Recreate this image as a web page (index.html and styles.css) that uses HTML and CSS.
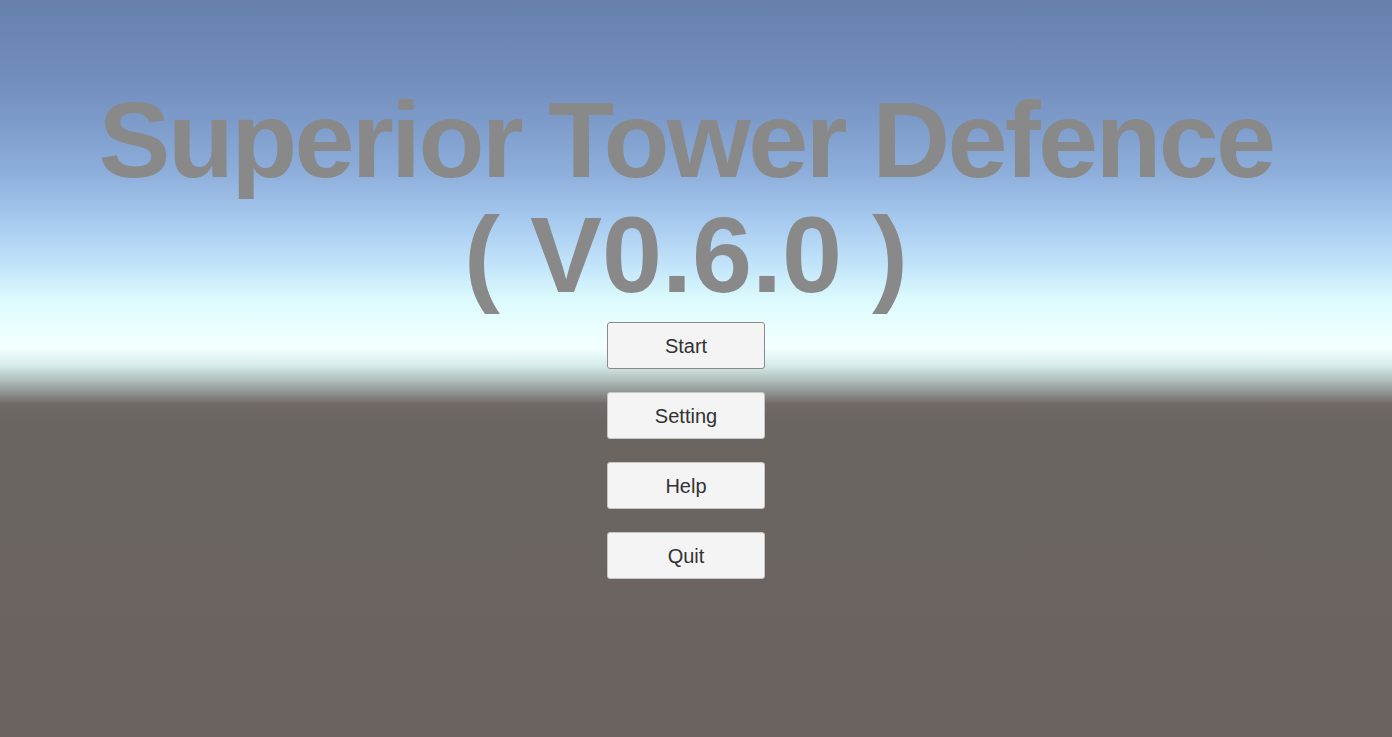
FILE: index.html
```html
<!DOCTYPE html>
<html>
<head>
<meta charset="utf-8">
<link rel="stylesheet" href="styles.css">
</head>
<body>
<main class="scene">
  <h1 class="title">
    <span class="title-line title-main">Superior Tower Defence</span>
    <span class="title-line">( V0.6.0 )</span>
  </h1>
  <nav class="menu">
    <button class="btn btn-active">Start</button>
    <button class="btn">Setting</button>
    <button class="btn">Help</button>
    <button class="btn">Quit</button>
  </nav>
</main>
</body>
</html>
```
FILE: styles.css
```css
html, body {
  margin: 0;
  padding: 0;
  width: 1392px;
  height: 737px;
  overflow: hidden;
}
body {
  font-family: "Liberation Sans", Arial, sans-serif;
  background: linear-gradient(to bottom,
    #6680ab 0px,
    #7490c0 90px,
    #8cadd9 170px,
    #a6c9ef 220px,
    #c2e4fa 265px,
    #dcfbfd 300px,
    #ecffff 330px,
    #f4ffff 348px,
    #d6eceb 365px,
    #aebcbb 381px,
    #8a8e8c 394px,
    #716a67 404px,
    #6b6561 420px,
    #6a6360 737px);
}
.scene {
  width: 1372px;
  height: 737px;
  display: flex;
  flex-direction: column;
  align-items: center;
}
.title {
  margin: 82px 0 0 0;
  display: flex;
  flex-direction: column;
  align-items: center;
  font-family: "Liberation Sans", Arial, sans-serif;
  font-weight: bold;
  font-size: 108px;
  line-height: 115px;
  color: #898989;
  white-space: nowrap;
}
.title-main {
  letter-spacing: -2.7px;
}
.menu {
  margin-top: 10px;
  display: flex;
  flex-direction: column;
  gap: 23px;
}
.btn {
  width: 158px;
  height: 47px;
  background: #f4f4f4;
  border: 1px solid #c6c6c6;
  border-radius: 3px;
  font-family: "Liberation Sans", Arial, sans-serif;
  font-size: 20px;
  color: #323232;
  padding: 1px 0 0 0;
}
.btn-active {
  border-color: #8a8a8a;
}
```
